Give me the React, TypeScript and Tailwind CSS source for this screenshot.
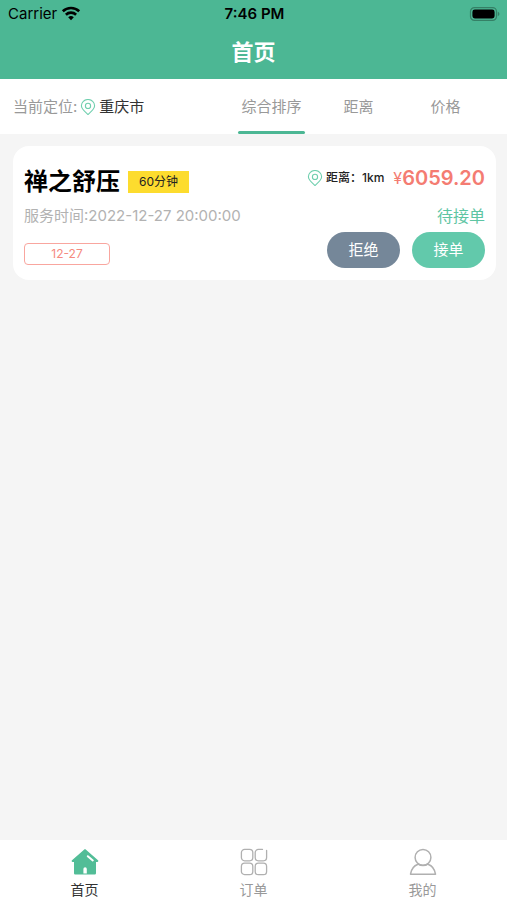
import { useState } from "react";

const tabs = ["综合排序", "距离", "价格"];

function PinIcon() {
  return (
    <svg
      className="h-4 w-4 shrink-0 text-[#6fcfae]"
      viewBox="0 0 16 16"
      fill="none"
      stroke="currentColor"
      strokeWidth="1.1"
      strokeLinejoin="round"
    >
      <path d="M8 15.5C5 12.8 1.400 10.200 1.400 6.800a6.600 6.300 0 0 1 13.200 0C14.600 10.200 11 12.800 8 15.500Z" />
      <circle cx="8" cy="6.9" r="2.6" />
    </svg>
  );
}

function WifiIcon() {
  return (
    <svg className="h-4 w-5" viewBox="0 0 20 16" fill="none" stroke="#000" strokeWidth="2.6">
      <path d="M1.800 5.300a11.800 11.800 0 0 1 16.400 0" />
      <path d="M4.900 8.700a7.300 7.300 0 0 1 10.200 0" />
      <path d="M10 14.200 7.200 11.300a4 4 0 0 1 5.600 0Z" fill="#000" stroke="none" />
    </svg>
  );
}

function BatteryIcon() {
  return (
    <svg className="h-4 w-8" viewBox="0 0 32 16" fill="none">
      <rect x="1.5" y="1.6" width="26" height="12.8" rx="4" stroke="#358066" strokeWidth="1.2" />
      <rect x="3.4" y="3.5" width="22.2" height="9" rx="2.4" fill="#000" />
      <path d="M28.800 5.800v4.400c1-.4 1.600-1.200 1.600-2.200s-.6-1.800-1.600-2.200Z" fill="#358066" />
    </svg>
  );
}

function HomeIcon() {
  return (
    <svg className="h-7 w-7" viewBox="0 0 28 28">
      <path
        d="M13 1.700c.6-.5 1.400-.5 2 0L27 12.300c.7.700.3 1.700-.6 1.700h-1.400v11c0 1-.6 1.600-1.600 1.600H4.600c-1 0-1.600-.6-1.600-1.600V14H1.600c-.9 0-1.300-1-.6-1.700Z"
        fill="#52bd97"
      />
      <path d="M12.400 25.400v-4.400a1.700 1.700 0 0 1 3.400 0v4.400Z" fill="#fff" />
      <path d="m16.800 8.200 5 4.200" stroke="#fff" strokeWidth="2" strokeLinecap="round" />
    </svg>
  );
}

function OrdersIcon() {
  return (
    <svg className="h-7 w-7" viewBox="0 0 28 28" fill="none" stroke="#b0b0b0" strokeWidth="1.300">
      <rect x="1.400" y="1.400" width="11.400" height="11.400" rx="3.200" />
      <rect x="1.400" y="15.200" width="11.400" height="11.400" rx="3.200" />
      <rect x="15.200" y="15.200" width="11.400" height="11.400" rx="3.200" />
      <path
        d="M22.500 1.400h-4.100a3.200 3.200 0 0 0-3.200 3.200v5a3.200 3.200 0 0 0 3.200 3.200h5a3.200 3.200 0 0 0 3.200-3.200V2.400"
        strokeLinecap="round"
      />
    </svg>
  );
}

function ProfileIcon() {
  return (
    <svg
      className="h-7 w-7"
      viewBox="0 0 28 28"
      fill="none"
      stroke="#b0b0b0"
      strokeWidth="1.500"
      strokeLinejoin="round"
    >
      <circle cx="14" cy="9.400" r="7.900" />
      <path d="M9 16.200C5.200 17.600 2.200 21 1.500 26.200h25c-.7-5.200-3.700-8.600-7.500-10" />
      <path d="M9 16.200c3.200 1.800 6.800 1.800 10 0" />
    </svg>
  );
}

const navItems = [
  { label: "首页", icon: <HomeIcon />, color: "text-[#333]" },
  { label: "订单", icon: <OrdersIcon />, color: "text-[#999]" },
  { label: "我的", icon: <ProfileIcon />, color: "text-[#999]" },
];

export default function App() {
  const [activeTab, setActiveTab] = useState(0);

  return (
    <div className="flex min-h-screen flex-col bg-[#f5f5f5] font-['Inter','Noto_Sans_CJK_SC',sans-serif]">
      <header className="bg-[#4cb794]">
        {/* Status bar */}
        <div className="grid h-7 grid-cols-3 items-center pr-1.5 pl-2 text-[15px] leading-5 text-black">
          <div className="flex items-center gap-1">
            <span>Carrier</span>
            <WifiIcon />
          </div>
          <span className="text-center font-semibold">7:46 PM</span>
          <div className="flex justify-end">
            <BatteryIcon />
          </div>
        </div>
        <h1 className="h-[51px] pt-2 text-center text-[22px] leading-8 font-bold text-white">首页</h1>
      </header>

      {/* Location and sorting */}
      <div className="flex h-[55px] items-stretch bg-white pr-[18px] pl-[13px] text-[15px] leading-5">
        <div className="flex flex-1 items-center gap-[3px]">
          <span className="text-[#999]">当前定位:</span>
          <PinIcon />
          <span className="text-[#333]">重庆市</span>
        </div>
        <div className="flex">
          {tabs.map((tab, i) => (
            <button
              key={tab}
              onClick={() => setActiveTab(i)}
              className="flex w-[87px] cursor-pointer flex-col items-center justify-between pt-[18px] text-[#999]"
            >
              {tab}
              <span
                className={`h-[3px] w-[67px] rounded-full ${i === activeTab ? "bg-[#4cb794]" : "bg-transparent"}`}
              ></span>
            </button>
          ))}
        </div>
      </div>

      <main className="flex-1 py-3 pr-[11px] pl-[13px]">
        <article className="rounded-2xl bg-white px-[11px] pt-4 pb-3">
          <div className="flex items-start justify-between">
            <div className="flex items-center gap-2 pt-0.5">
              <h2 className="text-2xl leading-9 font-bold text-black">禅之舒压</h2>
              <span className="w-[61px] bg-[#fddc2e] text-center text-xs leading-[22px] text-[#222]">
                60分钟
              </span>
            </div>
            <div className="flex items-center gap-[3px]">
              <PinIcon />
              <span className="text-xs leading-8 font-medium text-[#222]">距离：1km</span>
              <span className="ml-1.5 flex items-center leading-8 text-[#f47c72]">
                <span className="text-base leading-8">¥</span>
                <span className="text-xl leading-8 font-semibold">6059.20</span>
              </span>
            </div>
          </div>

          <div className="flex justify-between text-[15px] leading-8">
            <span className="text-[#b2b2b2]">服务时间:2022-12-27 20:00:00</span>
            <span className="text-base leading-8 text-[#5ec5a3]">待接单</span>
          </div>

          <div className="flex items-center justify-between">
            <span className="mt-2 w-[86px] rounded-sm border border-[#f9a69f] text-center text-xs leading-5 text-[#f58a80]">
              12-27
            </span>
            <div className="flex gap-3 text-[15px] leading-9 text-white">
              <button className="w-[73px] cursor-pointer rounded-full bg-[#758799]">拒绝</button>
              <button className="w-[73px] cursor-pointer rounded-full bg-[#62c9ab]">接单</button>
            </div>
          </div>
        </article>
      </main>

      <nav className="grid h-[60px] grid-cols-3 bg-white">
        {navItems.map((item) => (
          <a
            key={item.label}
            href="#"
            className={`flex flex-col items-center gap-1 pt-2 text-sm leading-5 ${item.color}`}
          >
            {item.icon}
            {item.label}
          </a>
        ))}
      </nav>
    </div>
  );
}
